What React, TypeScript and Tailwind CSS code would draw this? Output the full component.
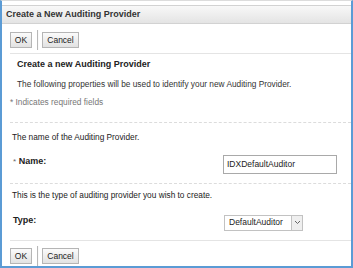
import React from 'react';

const font = { fontFamily: '"Liberation Sans", Arial, sans-serif' };

const Btn = ({ label, w }: { label: string; w: string }) => (
  <button
    className={`${w} h-[16px] border border-[#b5b5b5] bg-gradient-to-b from-[#fbfbfb] to-[#e2e2e2] text-[8.5px] leading-none text-[#222] flex items-center justify-center`}
  >
    {label}
  </button>
);

const ButtonRow = () => (
  <div className="h-[20px] flex items-center">
    <Btn label="OK" w="w-[22px]" />
    <div className="ml-[5px] w-[2px] h-[20px] border-l border-[#b8b8b8] bg-[#fafafa]" />
    <div className="ml-[3px]">
      <Btn label="Cancel" w="w-[37px]" />
    </div>
  </div>
);

export default function App() {
  return (
    <div className="w-[353px] h-[268px] bg-white overflow-hidden" style={font}>
      <div className="h-full border-l-2 border-r-2 border-b-2 border-[#5b9bd5] border-t border-t-[#dcdcdc] flex flex-col">
        <div className="mt-[4px] h-[19px] bg-gradient-to-b from-[#f8f8f8] to-[#e4e4e4] border-t border-b border-[#d2d2d2] flex items-center pl-[4px]">
          <span className="text-[9px] font-bold text-[#333]">Create a New Auditing Provider</span>
        </div>
        <div className="pl-[8px] pt-[6px] flex flex-col">
          <ButtonRow />
          <div className="mt-[3px] border-t border-[#e4e4e4]" />
          <div className="h-[22px] pl-[7px] flex items-center text-[9px] font-bold text-[#222]">
            Create a new Auditing Provider
          </div>
          <div className="h-[16px] pl-[7px] flex items-center text-[8.3px] text-[#333]">
            The following properties will be used to identify your new Auditing Provider.
          </div>
          <div className="h-[20px] flex items-center text-[8.3px] text-[#777]">* Indicates required fields</div>
          <div className="mt-[10px] border-t border-dashed border-[#dcdcdc]" />
          <div className="mt-[6px] h-[16px] pl-[2px] flex items-center text-[8.3px] text-[#222]">
            The name of the Auditing Provider.
          </div>
          <div className="mt-[9px] h-[20px] flex items-center pl-[3px] pr-[14px]">
            <span className="pb-[4px] text-[9px] font-bold text-[#222]">
              <span className="text-[#666] font-normal text-[8px]">*</span> Name:
            </span>
            <div className="ml-auto w-[114px] h-[19px] border border-[#a9a9a9] flex items-center pl-[3px] text-[8.5px] text-[#222]">
              IDXDefaultAuditor
            </div>
          </div>
          <div className="mt-[9px] border-t border-dashed border-[#dcdcdc]" />
          <div className="mt-[3px] h-[16px] pl-[2px] flex items-center text-[8.3px] text-[#222]">
            This is the type of auditing provider you wish to create.
          </div>
          <div className="mt-[9px] h-[18px] flex items-center pl-[3px]">
            <span className="w-[211px] text-[9px] font-bold text-[#222]">Type:</span>
            <div className="mt-[3px] h-[16px] border border-[#c2c2c2] flex items-center text-[8.5px] text-[#222]">
              <span className="w-[66px] pl-[4px]">DefaultAuditor</span>
              <span className="w-[11px] h-full border-l border-[#c2c2c2] bg-[#efefef] flex items-center justify-center">
                <svg width="7" height="5" viewBox="0 0 7 5">
                  <path d="M1 1 L3.5 3.5 L6 1" fill="none" stroke="#666" strokeWidth="1" />
                </svg>
              </span>
            </div>
          </div>
          <div className="mt-[10px] border-t border-[#e4e4e4]" />
          <div className="mt-[5px]">
            <ButtonRow />
          </div>
        </div>
      </div>
    </div>
  );
}
